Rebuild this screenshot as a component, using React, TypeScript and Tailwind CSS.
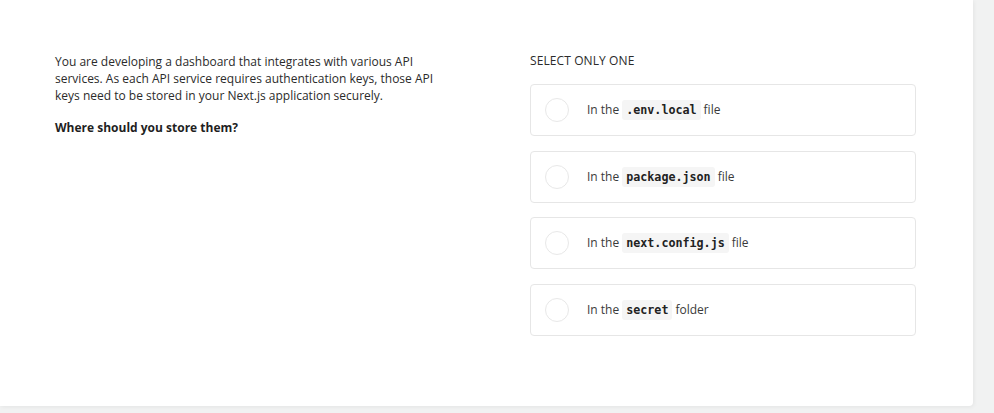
const options = [
  { code: '.env.local', suffix: 'file' },
  { code: 'package.json', suffix: 'file' },
  { code: 'next.config.js', suffix: 'file' },
  { code: 'secret', suffix: 'folder' },
];

export default function App() {
  return (
    <div className="w-[994px] h-[413px] bg-[#f1f2f2] overflow-hidden" style={{ fontFamily: '"Open Sans", "Liberation Sans", sans-serif' }}>
      <div className="w-[973px] h-[406px] bg-white rounded-br-[4px] shadow-[1px_1px_4px_rgba(0,0,0,0.06)] flex pl-[55px] pt-[53px]">
        {/* Question */}
        <div className="w-[475px] pt-[1px] text-[12px] leading-[16.8px] text-[#2b2b2b]">
          <p className="w-[400px]">
            You are developing a dashboard that integrates with various API services. As each API service requires authentication keys, those API keys need to be stored in your Next.js application securely.
          </p>
          <p className="mt-[16px] font-bold text-[#1f1f1f]">Where should you store them?</p>
        </div>

        {/* Answers */}
        <div className="w-[386px]">
          <div className="text-[12px] leading-[16px] text-[#2b2b2b] tracking-[0.1px]">SELECT ONLY ONE</div>
          <div className="mt-[15px] flex flex-col gap-[14.7px]">
            {options.map((o) => (
              <div
                key={o.code}
                className="h-[52px] border border-[#e6e6e6] rounded-[4px] flex items-center pl-[14px] bg-white"
              >
                <div className="w-[24px] h-[24px] rounded-full border border-[#e8e8e8] shrink-0" />
                <div className="ml-[18px] text-[12px] text-[#3a3a3a] flex items-center">
                  <span>In the</span>
                  <code
                    className="ml-[3px] mr-[3px] px-[4px] py-[2px] bg-[#f5f5f5] rounded-[3px] text-[11.7px] leading-[16px] font-bold text-[#222]"
                    style={{ fontFamily: '"DejaVu Sans Mono", "Liberation Mono", monospace' }}
                  >
                    {o.code}
                  </code>
                  <span>{o.suffix}</span>
                </div>
              </div>
            ))}
          </div>
        </div>
      </div>
    </div>
  );
}
